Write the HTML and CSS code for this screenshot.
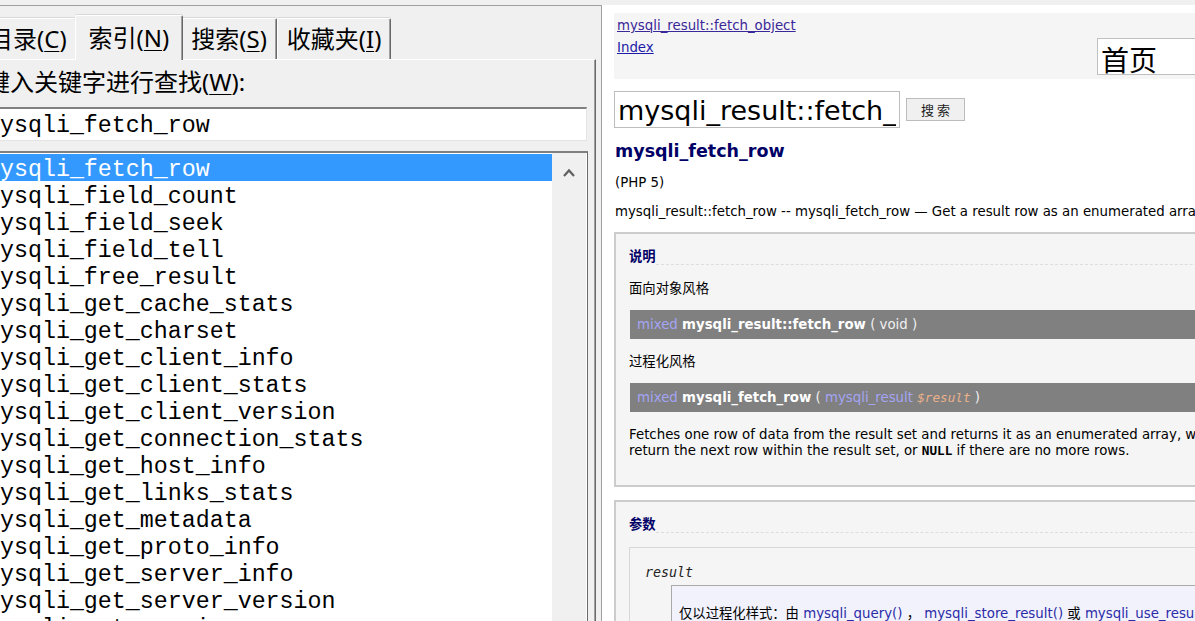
FILE: index.html
```html
<!DOCTYPE html>
<html lang="zh-CN">
<head>
<meta charset="utf-8">
<title>mysqli_fetch_row</title>
<link rel="stylesheet" href="styles.css">
</head>
<body>
<div class="app">
  <div class="left">
    <div class="tabs">
      <div class="tab">目录(<u>C</u>)</div>
      <div class="tab active">索引(<u>N</u>)</div>
      <div class="tab">搜索(<u>S</u>)</div>
      <div class="tab">收藏夹(<u>I</u>)</div>
    </div>
    <div class="panel">
      <div class="label">键入关键字进行查找(<u>W</u>):</div>
      <input class="kw" type="text" value="mysqli_fetch_row">
      <div class="list">
        <div class="rows">
          <div class="row sel">mysqli_fetch_row</div>
          <div class="row">mysqli_field_count</div>
          <div class="row">mysqli_field_seek</div>
          <div class="row">mysqli_field_tell</div>
          <div class="row">mysqli_free_result</div>
          <div class="row">mysqli_get_cache_stats</div>
          <div class="row">mysqli_get_charset</div>
          <div class="row">mysqli_get_client_info</div>
          <div class="row">mysqli_get_client_stats</div>
          <div class="row">mysqli_get_client_version</div>
          <div class="row">mysqli_get_connection_stats</div>
          <div class="row">mysqli_get_host_info</div>
          <div class="row">mysqli_get_links_stats</div>
          <div class="row">mysqli_get_metadata</div>
          <div class="row">mysqli_get_proto_info</div>
          <div class="row">mysqli_get_server_info</div>
          <div class="row">mysqli_get_server_version</div>
          <div class="row">mysqli_get_warnings</div>
        </div>
        <div class="vscroll">
          <svg class="chev" width="12" height="9" viewBox="0 0 12 9"><polyline points="1,8 6,2.5 11,8" fill="none" stroke="#606060" stroke-width="2.2"/></svg>
        </div>
      </div>
    </div>
  </div>
  <div class="right">
    <div class="page">
      <div class="nav">
        <div class="navlinks">
          <a class="visited" href="#">mysqli_result::fetch_object</a>
          <a href="#">Index</a>
        </div>
        <input class="home" type="text" value="首页">
      </div>
      <div class="search">
        <input class="q" type="text" value="mysqli_result::fetch_row">
        <button class="go" type="button">搜 索</button>
      </div>
      <h1 class="title">mysqli_fetch_row</h1>
      <p class="ver">(PHP 5)</p>
      <p class="purpose">mysqli_result::fetch_row -- mysqli_fetch_row — Get a result row as an enumerated array</p>
      <div class="section">
        <h3 class="sect-title"><span>说明</span></h3>
        <p class="style-label">面向对象风格</p>
        <div class="synopsis"><span class="type">mixed</span> <b class="fn">mysqli_result::fetch_row</b> <span class="punc">( void )</span></div>
        <p class="style-label second">过程化风格</p>
        <div class="synopsis"><span class="type">mixed</span> <b class="fn">mysqli_fetch_row</b> <span class="punc">(</span> <span class="type">mysqli_result</span> <i class="var">$result</i> <span class="punc">)</span></div>
        <p class="para">Fetches one row of data from the result set and returns it as an enumerated array, where each column is stored in an array offset starting from 0 (zero). Each subsequent call to this function will<br>return the next row within the result set, or <code class="const">NULL</code> if there are no more rows.</p>
      </div>
      <div class="section params-sect">
        <h3 class="sect-title"><span>参数</span></h3>
        <div class="params">
          <div class="param-name">result</div>
          <div class="param-desc">仅以过程化样式：由 <a href="#">mysqli_query()</a> ， <a href="#">mysqli_store_result()</a> 或 <a href="#">mysqli_use_result()</a> 返回的结果集标识。</div>
        </div>
      </div>
    </div>
  </div>
</div>
</body>
</html>
```

FILE: styles.css
```css
html, body {
  margin: 0;
  padding: 0;
}
body {
  background: #f0f0f0;
  width: 1195px;
  height: 621px;
  overflow: hidden;
  font-family: "DejaVu Sans", "Noto Sans CJK SC", sans-serif;
}
.app {
  display: flex;
  height: 621px;
  padding-top: 5px;
  box-sizing: border-box;
}

/* ---------- left help pane ---------- */
.left {
  flex: none;
  width: 602px;
  box-sizing: border-box;
  border-top: 1px solid #a0a0a0;
  border-right: 1px solid #a0a0a0;
  display: flex;
  flex-direction: column;
  overflow: hidden;
}
.tabs {
  flex: none;
  display: flex;
  align-items: flex-end;
  height: 53px;
  margin-left: -21px;
}
.tab {
  height: 41px;
  box-sizing: border-box;
  padding: 0 9px;
  display: flex;
  align-items: center;
  white-space: nowrap;
  background: #f0f0f0;
  border-top: 1px solid #fff;
  border-left: 1px solid #fff;
  border-right: 1px solid #696969;
  box-shadow: inset -1px 0 #a0a0a0, 0 -1px #d8d8d8;
  border-radius: 2px 2px 0 0;
  font-family: "Noto Sans", "Noto Sans CJK SC", sans-serif;
  font-size: 24px;
  line-height: 1;
  color: #000;
}
.tab u {
  text-decoration-thickness: 1px;
  text-underline-offset: 3px;
}
.tab.active {
  height: 45px;
  margin: 0 -2px -1px;
  padding: 0 13px;
  position: relative;
  z-index: 1;
}
.panel {
  flex: 1;
  width: 596px;
  box-sizing: border-box;
  border-top: 1px solid #fff;
  border-right: 1px solid #696969;
  box-shadow: inset -1px 0 #a0a0a0;
  padding-top: 7px;
}
.label {
  margin-left: -14px;
  height: 30px;
  line-height: 30px;
  white-space: nowrap;
  font-family: "Noto Sans", "Noto Sans CJK SC", sans-serif;
  font-size: 24px;
  color: #000;
}
.label u {
  text-decoration-thickness: 1px;
  text-underline-offset: 3px;
}
.kw {
  display: block;
  margin: 10px 0 0 -17px;
  width: 604px;
  height: 34px;
  box-sizing: border-box;
  border: none;
  border-top: 2px solid #808080;
  border-left: 2px solid #808080;
  border-right: 1px solid #e3e3e3;
  border-bottom: 1px solid #e3e3e3;
  padding: 3px 0 0 1px;
  background: #fff;
  font-family: "Liberation Mono", monospace;
  font-size: 23.3px;
  color: #000;
  outline: none;
}
.list {
  display: flex;
  margin: 10px 0 0 -17px;
  width: 605px;
  height: 600px;
  box-sizing: border-box;
  border-top: 2px solid #808080;
  border-right: 1px solid #696969;
}
.rows {
  flex: 1;
  background: #fff;
  padding-top: 1px;
  overflow: hidden;
}
.row {
  height: 27px;
  line-height: 33px;
  padding-left: 3px;
  white-space: nowrap;
  font-family: "Liberation Mono", monospace;
  font-size: 23.3px;
  color: #000;
}
.row.sel {
  background: #3399ff;
  color: #fff;
}
.vscroll {
  flex: none;
  width: 35px;
  box-sizing: border-box;
  background: #f0f0f0;
  border-right: 1px solid #fff;
  padding: 15px 0 0 11px;
}
.chev {
  display: block;
}

/* ---------- right content pane ---------- */
.right {
  flex: 1;
  background: #fff;
  overflow: hidden;
  padding: 8px 0 0 12px;
  font-size: 10pt;
  color: #000;
}
.page {
  width: 900px;
}
.nav {
  display: flex;
  height: 66px;
  background: #f5f5f5;
}
.navlinks {
  flex: 0 0 483px;
  box-sizing: border-box;
  padding: 2px 0 0 3px;
  display: flex;
  flex-direction: column;
  align-items: flex-start;
  line-height: 22px;
}
.navlinks a {
  color: #1c1ca8;
}
.navlinks a.visited {
  color: #3a2898;
}
.home {
  margin-top: 25px;
  width: 160px;
  height: 37px;
  box-sizing: border-box;
  border: 1px solid #c0c0c0;
  padding: 5px 3px 0;
  background: #fff;
  font-family: "Noto Sans CJK SC", sans-serif;
  font-size: 28px;
  color: #000;
  outline: none;
}
.search {
  display: flex;
  align-items: center;
  margin-top: 12px;
}
.q {
  width: 286px;
  height: 37px;
  box-sizing: border-box;
  border: 1px solid #bdbdbd;
  padding: 2px 3px 0;
  font-family: "DejaVu Sans", sans-serif;
  font-size: 27px;
  color: #000;
  outline: none;
}
.go {
  margin-left: 6px;
  width: 59px;
  height: 23px;
  padding: 0;
  background: #f0f0f0;
  border: 1px solid #bcbcbc;
  font-family: "Noto Sans CJK SC", sans-serif;
  font-size: 13px;
  color: #222;
}
.title {
  margin: 11px 0 0 1px;
  font-size: 17.5px;
  line-height: 24px;
  font-weight: bold;
  color: #000066;
}
.ver {
  margin: 11px 0 0 1px;
  line-height: 18px;
}
.purpose {
  margin: 11px 0 0 1px;
  line-height: 18px;
  white-space: nowrap;
}
.section {
  margin-top: 11px;
  border: 2px solid #cccccc;
  background: #f5f5f5;
  padding: 15px 0 26px 13px;
}
.params-sect {
  margin-top: 13px;
}
.sect-title {
  display: flex;
  margin: 0;
  font-size: 10pt;
  line-height: 16px;
  font-weight: bold;
  color: #000066;
}
.sect-title::after {
  content: "";
  flex: 1;
  border-bottom: 1px dashed #dddddd;
}
.style-label {
  margin: 15px 0 0;
  line-height: 18px;
}
.style-label.second {
  margin-top: 14px;
}
.synopsis {
  margin: 12px 0 0 1px;
  height: 29px;
  line-height: 29px;
  padding-left: 7px;
  background: #808080;
  white-space: nowrap;
  color: #e4e4e4;
}
.synopsis .type {
  color: #a4a4f4;
}
.synopsis .fn {
  color: #fff;
}
.synopsis .punc {
  color: #f0f0f0;
}
.synopsis .var {
  font-family: "DejaVu Sans Mono", monospace;
  font-size: 9.5pt;
  color: #eab08a;
}
.para {
  margin: 15px 0 0;
  line-height: 16px;
  white-space: nowrap;
}
.const {
  font-family: "DejaVu Sans Mono", monospace;
  font-weight: bold;
  font-size: 9.5pt;
}
.params {
  margin-top: 14px;
  border: 1px solid #d8d8d8;
  padding: 16px 0 0 15px;
}
.param-name {
  line-height: 18px;
  font-family: "DejaVu Sans Mono", monospace;
  font-style: italic;
  font-size: 10pt;
  color: #222;
}
.param-desc {
  margin: 3px 0 0 26px;
  border: 1px solid #aaaaaa;
  background: #f2f2fc;
  padding: 19px 0 20px 7px;
  line-height: 18px;
  white-space: nowrap;
}
.param-desc a {
  color: #2b2ba8;
  text-decoration: none;
}
```
